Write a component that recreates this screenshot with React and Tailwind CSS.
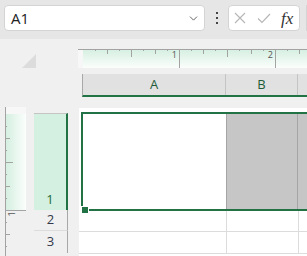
import { ChevronDown } from 'lucide-react';

const GREEN = '#217346';

function HRuler() {
  // eighth-inch ticks every 12px, origin at local x 5
  const ticks = [];
  for (let k = 1; k <= 18; k++) {
    const x = 5 + k * 12 + 0.5;
    let len = 2;
    if (k % 8 === 0) len = 19;
    else if (k % 4 === 0) len = 8;
    else if (k % 2 === 0) len = 5;
    ticks.push(<line key={k} x1={x} y1={0} x2={x} y2={len} stroke="#a3a3a3" strokeWidth="1" />);
  }
  return (
    <svg width="229" height="19" className="block overflow-visible">
      <defs>
        <linearGradient id="hg" x1="0" y1="0" x2="0" y2="1">
          <stop offset="0" stopColor="#d5efe1" />
          <stop offset="1" stopColor="#fbfefc" />
        </linearGradient>
      </defs>
      <rect x="0" y="0" width="5" height="19" fill="#f7f7f7" />
      <rect x="5" y="0" width="224" height="19" fill="url(#hg)" />
      <line x1="0" y1="0.5" x2="229" y2="0.5" stroke="#a3a3a3" />
      {ticks}
      <text x="99" y="9" fontSize="9" fill="#555" textAnchor="end" fontFamily="'Open Sans', sans-serif">1</text>
      <text x="195" y="9" fontSize="9" fill="#555" textAnchor="end" fontFamily="'Open Sans', sans-serif">2</text>
    </svg>
  );
}

function VRuler() {
  const ticks = [];
  for (let k = 1; k <= 11; k++) {
    const y = 7 + k * 12 + 0.5;
    if (k === 8) continue;
    let len = 2;
    if (k % 4 === 0) len = 8;
    else if (k % 2 === 0) len = 5;
    ticks.push(<line key={k} x1={0} y1={y} x2={len} y2={y} stroke="#a3a3a3" strokeWidth="1" />);
  }
  return (
    <svg width="21" height="149" className="block overflow-visible">
      <defs>
        <linearGradient id="vg" x1="0" y1="0" x2="1" y2="0">
          <stop offset="0" stopColor="#d5efe1" />
          <stop offset="1" stopColor="#fbfefc" />
        </linearGradient>
      </defs>
      <rect x="1" y="0" width="20" height="7" fill="#f7f7f7" />
      <rect x="1" y="7" width="20" height="96" fill="url(#vg)" />
      <line x1="0.5" y1="0" x2="0.5" y2="149" stroke="#a3a3a3" />
      <line x1="0" y1="103.5" x2="21" y2="103.5" stroke="#a3a3a3" />
      {ticks}
      <text x="0" y="0" fontSize="9" fill="#555" textAnchor="middle" transform="translate(10 107) rotate(-90)" fontFamily="'Open Sans', sans-serif">1</text>
    </svg>
  );
}

export default function App() {
  return (
    <div
      className="w-[307px] h-[256px] overflow-hidden bg-[#f0f0f0] flex flex-col"
      style={{ fontFamily: "'Open Sans', 'Noto Sans', sans-serif" }}
    >
      {/* name box + formula bar */}
      <div className="h-[39px] shrink-0 bg-[#e6e6e6] flex items-start pt-[5px] pl-[4px]">
        <div className="w-[201px] h-[26px] bg-white rounded-[4px] border border-[#d4d4d4] flex items-center justify-between pl-[6px] pr-[4px]">
          <span className="text-[15px] text-[#222] leading-none">A1</span>
          <ChevronDown size={13} strokeWidth={1.5} color="#444" />
        </div>
        <div className="w-[23px] h-[26px] flex flex-col items-center justify-center gap-[3px]">
          <span className="w-[2px] h-[2px] bg-[#444]" />
          <span className="w-[2px] h-[2px] bg-[#444]" />
          <span className="w-[2px] h-[2px] bg-[#444]" />
        </div>
        <div className="w-[72px] h-[26px] bg-white rounded-[4px] border border-[#d4d4d4] flex items-center pl-[4px]">
          <svg width="12" height="12" viewBox="0 0 12 12" className="ml-[1px]">
            <path d="M1 1 L11 11 M11 1 L1 11" stroke="#b5b5b5" strokeWidth="1.1" fill="none" />
          </svg>
          <svg width="14" height="12" viewBox="0 0 14 12" className="ml-[11px]">
            <path d="M1 6.5 L5 10.5 L13 2" stroke="#b5b5b5" strokeWidth="1.1" fill="none" />
          </svg>
          <span
            className="ml-[10px] text-[17px] italic text-[#333] leading-none"
            style={{ fontFamily: "'Liberation Serif', serif" }}
          >
            fx
          </span>
        </div>
        <div className="ml-[6px] flex-1 h-[26px] bg-white rounded-l-[4px] border border-r-0 border-[#d4d4d4]" />
      </div>

      {/* horizontal ruler */}
      <div className="mt-[10px] h-[19px] shrink-0 flex">
        <div className="w-[22px]" />
        <svg width="14" height="14" className="self-end block">
          <polygon points="14,0 14,14 0,14" fill="#dcdcdc" />
        </svg>
        <div className="w-[42px]" />
        <HRuler />
      </div>

      {/* column headers */}
      <div className="mt-[6px] h-[23px] shrink-0 flex pl-[82px]">
        <div className="flex-1 flex bg-[#e1e1e1] border-b-2 border-[#217346] border-l border-l-[#a8a8a8]">
          <div className="w-[143px] border-r border-[#c4c4c4] flex items-center justify-center text-[13px] text-[#1d5c3a]">A</div>
          <div className="w-[72px] border-r border-[#c4c4c4] flex items-center justify-center text-[13px] text-[#1d5c3a]">B</div>
          <div className="flex-1" />
        </div>
      </div>

      {/* body */}
      <div className="mt-[10px] flex-1 flex">
        <div className="ml-[5px]">
          <VRuler />
        </div>
        <div className="ml-[8px] w-[34px] pt-[6px] flex flex-col">
          <div className="h-[97px] bg-[#d3f0e0] border-t border-[#c4c4c4] flex items-end justify-center pb-[3px]" style={{ borderRight: `2px solid ${GREEN}` }}>
            <span className="text-[13px] text-[#1d6b3c] leading-[16px]">1</span>
          </div>
          <div className="h-[21px] border-r border-b border-r-[#a8a8a8] border-b-[#dcdcdc] flex items-center justify-center">
            <span className="text-[13px] text-[#33394a]">2</span>
          </div>
          <div className="h-[22px] border-r border-[#a8a8a8] flex items-center justify-center">
            <span className="text-[13px] text-[#33394a]">3</span>
          </div>
        </div>
        <div className="ml-[11px] mt-[1px] flex-1 bg-white relative">
          <div className="h-[4px]" />
          <div className="ml-[2px] h-[99px] flex border-y-2 border-l-2 border-[#217346]">
            <div className="w-[143px] bg-white" />
            <div className="w-[72px] bg-[#c6c6c6] border-l border-r border-[#a6a6a6]" />
            <div className="flex-1 bg-[#c6c6c6]" />
          </div>
          <div className="h-[21px] flex border-b border-[#dcdcdc]">
            <div className="w-[148px] border-r border-[#dcdcdc]" />
            <div className="w-[72px] border-r border-[#dcdcdc]" />
          </div>
          <div className="h-[22px] flex border-b border-[#dcdcdc]">
            <div className="w-[148px] border-r border-[#dcdcdc]" />
            <div className="w-[72px] border-r border-[#dcdcdc]" />
          </div>
          <div className="absolute left-[2px] top-[98px] w-[8px] h-[8px] bg-[#217346] border border-white" />
        </div>
      </div>
    </div>
  );
}
